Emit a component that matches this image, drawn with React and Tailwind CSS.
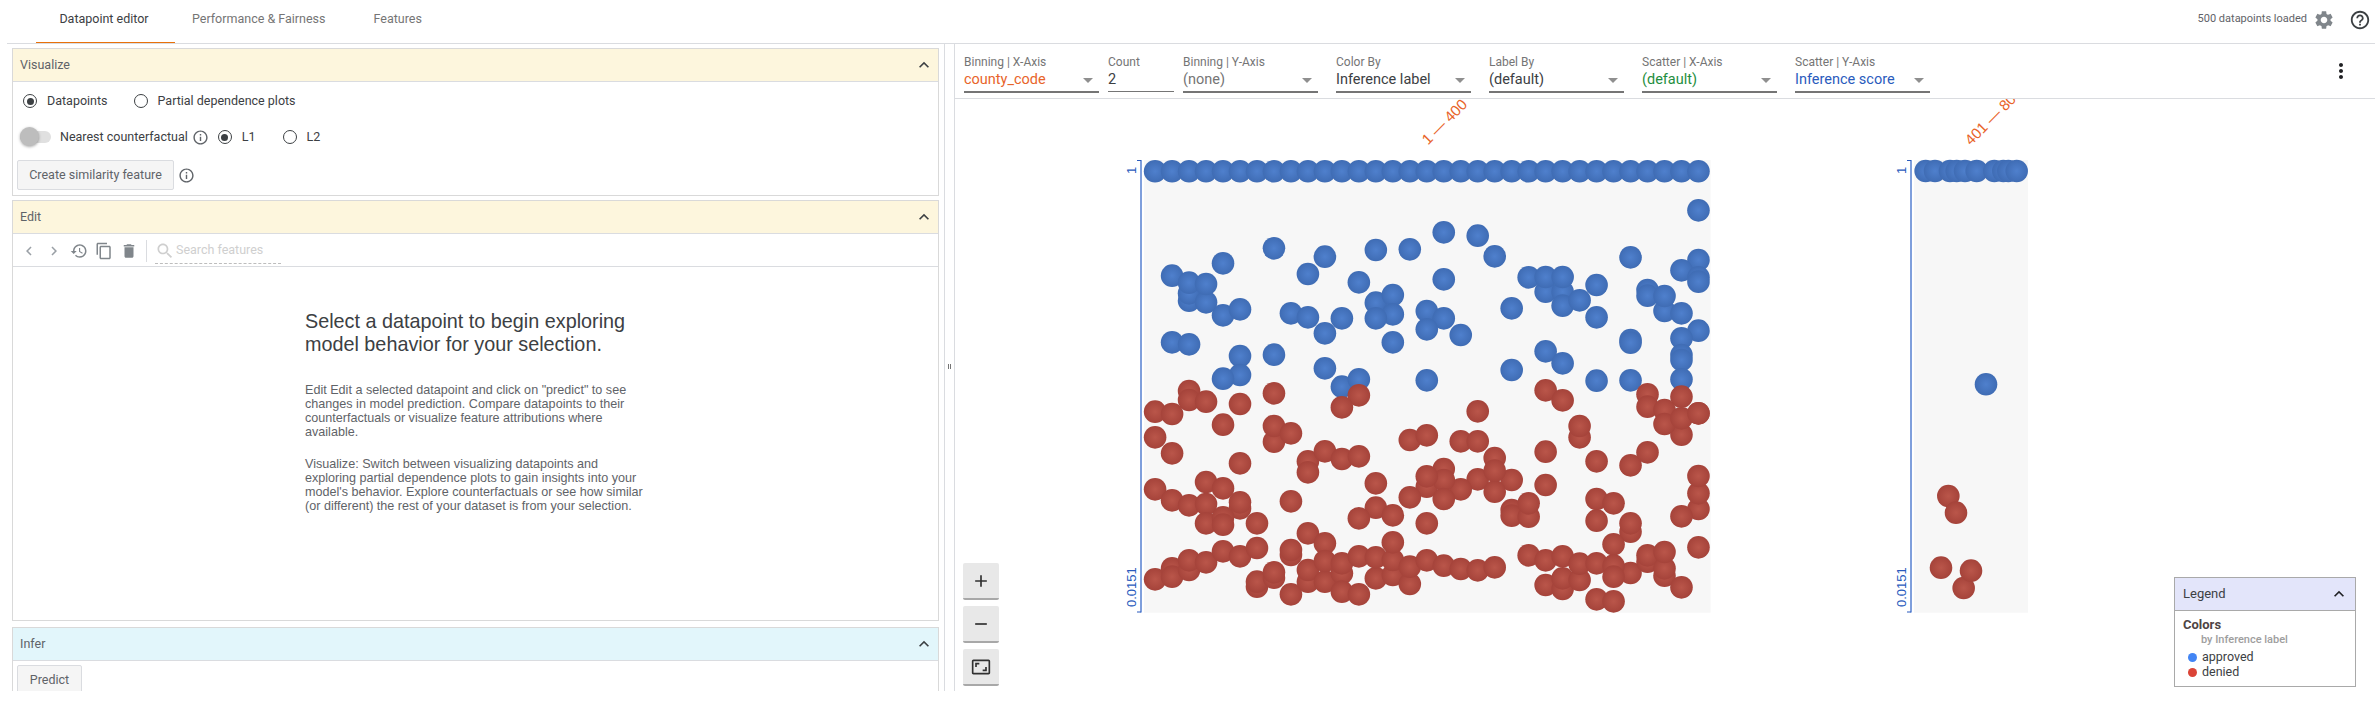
const P = {
  settings: 'M19.14 12.94c.04-.3.06-.61.06-.94 0-.32-.02-.64-.07-.94l2.03-1.58c.18-.14.23-.41.12-.61l-1.92-3.32c-.12-.22-.37-.29-.59-.22l-2.39.96c-.5-.38-1.03-.7-1.62-.94l-.36-2.54c-.04-.24-.24-.41-.48-.41h-3.84c-.24 0-.43.17-.47.41l-.36 2.54c-.59.24-1.13.57-1.62.94l-2.39-.96c-.22-.08-.47 0-.59.22L2.74 8.87c-.12.21-.08.47.12.61l2.03 1.58c-.05.3-.09.63-.09.94s.02.64.07.94l-2.03 1.58c-.18.14-.23.41-.12.61l1.92 3.32c.12.22.37.29.59.22l2.39-.96c.5.38 1.03.7 1.62.94l.36 2.54c.05.24.24.41.48.41h3.84c.24 0 .44-.17.47-.41l.36-2.54c.59-.24 1.13-.56 1.62-.94l2.39.96c.22.08.47 0 .59-.22l1.92-3.32c.12-.22.07-.47-.12-.61l-2.01-1.58zM12 15.6c-1.98 0-3.6-1.62-3.6-3.6s1.62-3.6 3.6-3.6 3.6 1.62 3.6 3.6-1.62 3.6-3.6 3.6z',
  help: 'M11 18h2v-2h-2v2zm1-16C6.48 2 2 6.48 2 12s4.48 10 10 10 10-4.48 10-10S17.52 2 12 2zm0 18c-4.41 0-8-3.59-8-8s3.59-8 8-8 8 3.59 8 8-3.59 8-8 8zm0-14c-2.21 0-4 1.79-4 4h2c0-1.1.9-2 2-2s2 .9 2 2c0 2-3 1.75-3 5h2c0-2.25 3-2.5 3-5 0-2.21-1.79-4-4-4z',
  info: 'M11 7h2v2h-2zm0 4h2v6h-2zm1-9C6.48 2 2 6.48 2 12s4.48 10 10 10 10-4.48 10-10S17.52 2 12 2zm0 18c-4.41 0-8-3.59-8-8s3.59-8 8-8 8 3.59 8 8-3.59 8-8 8z',
  less: 'M12 8l-6 6 1.41 1.41L12 10.83l4.59 4.58L18 14z',
  left: 'M15.41 7.41L14 6l-6 6 6 6 1.41-1.41L10.83 12z',
  right: 'M10 6L8.59 7.41 13.17 12l-4.58 4.59L10 18l6-6z',
  history: 'M13 3c-4.97 0-9 4.03-9 9H1l3.89 3.89.07.14L9 12H6c0-3.87 3.13-7 7-7s7 3.13 7 7-3.13 7-7 7c-1.93 0-3.68-.79-4.94-2.06l-1.42 1.42C8.27 19.99 10.51 21 13 21c4.97 0 9-4.03 9-9s-4.03-9-9-9zm-1 5v5l4.28 2.54.72-1.21-3.5-2.08V8H12z',
  copy: 'M16 1H4c-1.1 0-2 .9-2 2v14h2V3h12V1zm3 4H8c-1.1 0-2 .9-2 2v14c0 1.1.9 2 2 2h11c1.1 0 2-.9 2-2V7c0-1.1-.9-2-2-2zm0 16H8V7h11v14z',
  trash: 'M6 19c0 1.1.9 2 2 2h8c1.1 0 2-.9 2-2V7H6v12zM19 4h-3.5l-1-1h-5l-1 1H5v2h14V4z',
  search: 'M15.5 14h-.79l-.28-.27C15.41 12.59 16 11.11 16 9.5 16 5.91 13.09 3 9.5 3S3 5.91 3 9.5 5.91 16 9.5 16c1.61 0 3.09-.59 4.23-1.57l.27.28v.79l5 4.99L20.49 19l-4.99-5zm-6 0C7.01 14 5 11.99 5 9.5S7.01 5 9.5 5 14 7.01 14 9.5 11.99 14 9.5 14z',
  more: 'M12 8c1.1 0 2-.9 2-2s-.9-2-2-2-2 .9-2 2 .9 2 2 2zm0 2c-1.1 0-2 .9-2 2s.9 2 2 2 2-.9 2-2-.9-2-2-2zm0 6c-1.1 0-2 .9-2 2s.9 2 2 2 2-.9 2-2-.9-2-2-2z',
  add: 'M19 13h-6v6h-2v-6H5v-2h6V5h2v6h6v2z',
  remove: 'M19 13H5v-2h14v2z',
  aspect: 'M19 12h-2v3h-3v2h5v-5zM7 9h3V7H5v5h2V9zm14-6H3c-1.1 0-2 .9-2 2v14c0 1.1.9 2 2 2h18c1.1 0 2-.9 2-2V5c0-1.1-.9-2-2-2zm0 16.01H3V4.99h18v14.02z',
};

const Icon = ({ d, className }) => (
  <svg viewBox="0 0 24 24" className={className} fill="currentColor"><path d={d} /></svg>
);

// blue / red dots as [column, y] read off the chart
const colX = (c) => 1155.1 + c * 16.98;
const y4 = (v) => 150 + v / 3;
const y5 = (v) => 400 + v / 3;

const BLUE = [
  [32,181],[17,247],[19,257],[20,319],[7,295],[10,320],[13,300],[15,298],[4,340],[9,372],[1,377],[2,452],[2,430],[3,457],[2,398],[3,402],
  [4,496],[5,478],[12,397],[17,388],[23,425],[24,425],[24,467],[25,451],[22,382],[23,381],[24,381],[26,405],[26,502],[28,322],[32,330],[31,361],
  [32,382],[32,395],[29,420],[29,437],[30,483],[31,490],[30,438],[32,542],[31,565],[31,615],[31,630],[31,688],[28,570],[28,578],[28,691],[26,692],
  [23,604],[24,640],[21,475],[21,660],[18,555],[16,483],[17,505],[16,538],[16,691],[13,458],[14,435],[14,493],[13,505],[14,577],[11,505],[8,490],
  [9,502],[10,550],[1,577],[2,583],[5,618],[7,614],[5,675],[4,686],[10,655],[11,710],[12,688],
].map(([c, v]) => [colX(c), y4(v)]);

const RED_TOP = [
  [2,723],[2,750],[3,755],[5,762],[0,785],[1,792],[7,730],[12,736],[11,772],[23,721],[24,751],[19,784],[29,733],[29,770],[31,740],[30,780],[32,790],
].map(([c, v]) => [colX(c), y4(v)]);

const RED_LOW = [
  [4,74],[0,112],[1,160],[7,125],[7,78],[8,100],[5,190],[0,268],[1,301],[2,316],[3,246],[4,265],[3,312],[5,325],[5,307],[3,370],[4,352],[4,374],[6,370],
  [8,304],[9,184],[9,217],[10,154],[11,177],[12,169],[13,250],[13,323],[14,346],[12,355],[15,120],[16,106],[18,124],[19,124],[20,174],[19,238],[21,240],
  [20,275],[20,212],[18,268],[17,207],[16,260],[17,240],[16,229],[17,297],[15,292],[16,370],[21,330],[21,347],[22,350],[22,310],[23,155],[23,255],[25,112],[25,78],
  [26,184],[28,196],[29,157],[31,104],[30,72],[31,55],[32,40],[32,327],[32,280],[32,228],[31,349],[26,297],[27,310],[26,362],[28,395],[28,370],[27,433],[32,442],
  [0,538],[1,505],[1,530],[2,510],[2,481],[3,487],[4,454],[5,469],[6,444],[6,560],[6,545],[7,533],[7,517],[8,465],[8,450],[8,583],[9,400],[10,430],
  [9,545],[9,510],[10,545],[10,483],[11,520],[11,490],[11,575],[12,469],[12,583],[13,535],[13,472],[14,525],[14,480],[14,427],[15,552],[15,500],[16,481],[17,497],[18,507],[19,511],[20,502],
  [22,466],[23,555],[23,481],[24,567],[24,535],[24,469],[25,540],[25,491],[26,490],[26,598],[28,519],[27,497],[27,530],[27,604],[29,485],[29,466],[30,527],[30,505],[30,456],[31,562],
].map(([c, v]) => [colX(c), y5(v)]);

const BLUE_2 = [197, 225, 270, 290, 315, 350, 403, 430, 445, 470].map((v) => [1860 + v / 3, 171]);
const RED_2 = [[265,408],[288,458],[243,623],[311,684],[333,632]].map(([x, v]) => [1860 + x / 3, 360 + v / 3]);
const TOP_ROW = Array.from({ length: 33 }, (_, i) => [colX(i), 171.3]);

const Dots = ({ points, fill }) => points.map(([x, y], i) => (
  <circle key={i} cx={x} cy={y} r="11.3" fill={fill} />
));

const YAxis = ({ x, labelX }) => (
  <g>
    <rect x={x - 1} y="160" width="2" height="452.5" fill="#7f9fdc" />
    <rect x={x - 4} y="160" width="4" height="1" fill="#2a5bbd" />
    <rect x={x - 4} y="611.5" width="4" height="1" fill="#2a5bbd" />
    <text transform={`translate(${labelX} 174) rotate(-90)`} fontSize="13" fill="#2a5bbd" fontFamily="Liberation Sans, sans-serif">1</text>
    <text transform={`translate(${labelX} 607) rotate(-90)`} fontSize="13" fill="#2a5bbd" fontFamily="Liberation Sans, sans-serif">0.0151</text>
  </g>
);

const Chart = () => (
  <svg viewBox="955 99 1420 592" className="absolute top-0 left-0 w-[1420px] h-[592px]">
    <defs>
      <radialGradient id="dotBlue">
        <stop offset="0%" stopColor="#4f80cd" />
        <stop offset="100%" stopColor="#3f6cb4" />
      </radialGradient>
      <radialGradient id="dotRed">
        <stop offset="0%" stopColor="#ba564a" />
        <stop offset="100%" stopColor="#a5433a" />
      </radialGradient>
    </defs>
    <rect x="1144" y="160" width="566.6" height="452.7" fill="#f7f7f7" />
    <rect x="1914" y="160" width="114" height="452.7" fill="#f7f7f7" />
    <YAxis x={1141} labelX={1136} />
    <YAxis x={1911} labelX={1906} />
    <Dots points={TOP_ROW} fill="url(#dotBlue)" />
    <Dots points={BLUE} fill="url(#dotBlue)" />
    <Dots points={RED_TOP} fill="url(#dotRed)" />
    <Dots points={RED_LOW} fill="url(#dotRed)" />
    <Dots points={BLUE_2} fill="url(#dotBlue)" />
    <circle cx="1986" cy="384.3" r="11.3" fill="url(#dotBlue)" />
    <Dots points={RED_2} fill="url(#dotRed)" />
    <text transform="translate(1428 145.5) rotate(-45)" fontSize="15" fill="#e8642a" fontFamily="Liberation Sans, sans-serif">1 — 400</text>
    <text transform="translate(1971 146) rotate(-45)" fontSize="15" fill="#e8642a" fontFamily="Liberation Sans, sans-serif">401 — 800</text>
  </svg>
);

const Radio = ({ checked, label, className }) => (
  <div className={`flex items-center gap-[10px] ${className || ''}`}>
    <div className="w-[14px] h-[14px] rounded-full border border-[#3c4043] flex items-center justify-center">
      {checked && <div className="w-[7px] h-[7px] rounded-full bg-[#3c4043]" />}
    </div>
    <span className="text-[12.5px] text-[#3c4043]">{label}</span>
  </div>
);

const CardHeader = ({ title, bg }) => (
  <div className={`h-[33px] flex items-center justify-between pl-[7px] pr-[4px] border-b border-[#dadce0] ${bg}`}>
    <span className="text-[12.5px] text-[#5f6368]">{title}</span>
    <Icon d={P.less} className="w-[20px] h-[20px] text-[#3c4043]" />
  </div>
);

const Select = ({ label, value, valueClass, width = 'w-[135px]', gap = 'mr-[18px]' }) => (
  <div className={`${width} ${gap} flex flex-col`}>
    <span className="text-[12px] leading-[14px] text-[#757575] mt-[11px]">{label}</span>
    <div className="h-[24px] flex items-center justify-between pr-[6px] border-b-2 border-[#757575]">
      <span className={`text-[14.5px] ${valueClass}`}>{value}</span>
      <div className="w-0 h-0 border-l-[5px] border-r-[5px] border-t-[5px] border-l-transparent border-r-transparent border-t-[#8f8f8f]" />
    </div>
  </div>
);

const ZoomButton = ({ d }) => (
  <div className="w-[36px] h-[37px] bg-[#e8e8e8] rounded-[2px] border-b-2 border-[#a8a8a8] flex items-center justify-center">
    <Icon d={d} className="w-[20px] h-[20px] text-[#303030]" />
  </div>
);

export default function App() {
  return (
    <div className="w-full h-[691px] bg-white overflow-hidden font-['Roboto',sans-serif]">
      <div className="ml-[7px] h-[44px] border-b border-[#dadce0] flex items-center">
        <div className="ml-[29px] w-[139px] h-[43px] pb-[4px] pr-[3px] border-b-[1px] border-[#e8710a] flex items-center justify-center text-[12.5px] text-[#3c4043]">Datapoint editor</div>
        <div className="ml-[17px] pb-[4px] text-[12.5px] text-[#757575]">Performance &amp; Fairness</div>
        <div className="ml-[48px] pb-[4px] text-[12.5px] text-[#757575]">Features</div>
        <div className="ml-auto pb-[4px] flex items-center">
          <span className="text-[11px] text-[#5f6368] mr-[6px]">500 datapoints loaded</span>
          <Icon d={P.settings} className="w-[22px] h-[22px] text-[#80868b] mr-[14px]" />
          <Icon d={P.help} className="w-[22px] h-[22px] text-[#3c4043] mr-[4px]" />
        </div>
      </div>

      <div className="flex h-[647px]">
        <div className="w-[944px] shrink-0 pl-3 pr-[5px] pt-1 flex flex-col gap-[4px]">
          <div className="h-[148px] border border-[#d9d9d9] shrink-0">
            <CardHeader title="Visualize" bg="bg-[#fdf6dd]" />
            <div className="h-[38px] flex items-center pl-[10px]">
              <Radio checked label="Datapoints" />
              <Radio label="Partial dependence plots" className="ml-[26px]" />
            </div>
            <div className="h-[34px] flex items-center pl-[7px]">
              <div className="relative w-[31px] h-[12px] rounded-full bg-[#e0e0e0]">
                <div className="absolute -top-[4px] left-0 w-[19px] h-[19px] rounded-full bg-[#bdbdbd] shadow-[0_1px_3px_rgba(0,0,0,0.35)]" />
              </div>
              <span className="ml-[9px] text-[12.5px] text-[#3c4043]">Nearest counterfactual</span>
              <Icon d={P.info} className="ml-[4px] w-[17px] h-[17px] text-[#5f6368]" />
              <Radio checked label="L1" className="ml-[9px]" />
              <Radio label="L2" className="ml-[27px]" />
            </div>
            <div className="h-[30px] mt-[6px] flex items-center pl-[4px]">
              <div className="w-[157px] h-[30px] bg-[#f5f5f5] border border-[#dadce0] rounded-[2px] flex items-center justify-center text-[12.5px] text-[#5f6368]">Create similarity feature</div>
              <Icon d={P.info} className="ml-[4px] w-[17px] h-[17px] text-[#5f6368]" />
            </div>
          </div>

          <div className="h-[421px] border border-[#d9d9d9] shrink-0 flex flex-col">
            <CardHeader title="Edit" bg="bg-[#fdf6dd]" />
            <div className="h-[33px] pt-[2px] border-b border-[#dadce0] flex items-center pl-[7px] text-[#9aa0a6]">
              <Icon d={P.left} className="w-[18px] h-[18px]" />
              <Icon d={P.right} className="ml-[7px] w-[18px] h-[18px]" />
              <Icon d={P.history} className="ml-[7px] w-[18px] h-[18px] text-[#80868b]" />
              <Icon d={P.copy} className="ml-[7px] w-[18px] h-[18px] text-[#80868b]" />
              <Icon d={P.trash} className="ml-[7px] w-[18px] h-[18px] text-[#80868b]" />
              <div className="ml-[8px] w-px h-[22px] bg-[#dadce0]" />
              <div className="ml-[8px] w-[126px] h-[26px] border-b border-dashed border-[#bdbdbd] flex items-center text-[#cfcfcf]">
                <Icon d={P.search} className="w-[20px] h-[20px]" />
                <span className="ml-[1px] text-[12.5px]">Search features</span>
              </div>
            </div>
            <div className="pl-[292px] pt-[43px] font-['Liberation_Sans',sans-serif]">
              <h2 className="w-[340px] text-[19.8px] leading-[23px] font-normal text-[#3c4043]">Select a datapoint to begin exploring model behavior for your selection.</h2>
              <p className="w-[345px] mt-[27px] text-[12.6px] leading-[14px] text-[#5f6368]">Edit Edit a selected datapoint and click on "predict" to see changes in model prediction. Compare datapoints to their counterfactuals or visualize feature attributions where available.</p>
              <p className="w-[345px] mt-[18px] text-[12.6px] leading-[14px] text-[#5f6368]">Visualize: Switch between visualizing datapoints and exploring partial dependence plots to gain insights into your model's behavior. Explore counterfactuals or see how similar (or different) the rest of your dataset is from your selection.</p>
            </div>
          </div>

          <div className="flex-1 mt-[2px] border border-b-0 border-[#d9d9d9]">
            <CardHeader title="Infer" bg="bg-[#e2f6fb]" />
            <div className="pl-[4px] pt-[4px]">
              <div className="w-[65px] h-[30px] bg-[#f5f5f5] border border-[#dadce0] rounded-[2px] flex items-center justify-center text-[12.5px] text-[#5f6368]">Predict</div>
            </div>
          </div>
        </div>

        <div className="w-[11px] shrink-0 border-l border-r border-[#dadce0] flex items-center justify-center">
          <div className="flex gap-px mb-[3px]">
            <div className="w-px h-[5px] bg-[#757575]" />
            <div className="w-px h-[5px] bg-[#757575]" />
          </div>
        </div>

        <div className="flex-1 flex flex-col min-w-0">
          <div className="h-[55px] border-b border-[#dadce0] shrink-0 flex pl-[9px]">
            <Select label="Binning | X-Axis" value="county_code" valueClass="text-[#e8642a]" gap="mr-[9px]" />
            <div className="w-[66px] mr-[9px] flex flex-col">
              <span className="text-[12px] leading-[14px] text-[#757575] mt-[11px]">Count</span>
              <div className="h-[23px] flex items-center border-b border-[#757575] text-[14.5px] text-[#3c4043]">2</div>
            </div>
            <Select label="Binning | Y-Axis" value="(none)" valueClass="text-[#757575]" />
            <Select label="Color By" value="Inference label" valueClass="text-[#3c4043]" />
            <Select label="Label By" value="(default)" valueClass="text-[#3c4043]" />
            <Select label="Scatter | X-Axis" value="(default)" valueClass="text-[#1e8e3e]" />
            <Select label="Scatter | Y-Axis" value="Inference score" valueClass="text-[#2a5bbd]" />
            <Icon d={P.more} className="ml-auto mr-[22px] mt-[15px] w-[24px] h-[24px] text-[#202124]" />
          </div>
          <div className="relative flex-1 overflow-hidden">
            <Chart />
            <div className="absolute left-[8px] bottom-[5px] flex flex-col gap-[6px]">
              <ZoomButton d={P.add} />
              <ZoomButton d={P.remove} />
              <ZoomButton d={P.aspect} />
            </div>
            <div className="absolute left-[1219px] top-[478px] w-[182px] h-[110px] border border-[#a9a9a9] bg-white">
              <div className="h-[33px] bg-[#e3e5fa] border-b border-[#a9a9a9] flex items-center justify-between pl-[8px] pr-[6px]">
                <span className="text-[13px] text-[#3c4043]">Legend</span>
                <Icon d={P.less} className="w-[20px] h-[20px] text-[#202124]" />
              </div>
              <div className="pl-[8px] pt-[6px]">
                <div className="text-[13px] leading-[16px] font-bold text-[#4e4444]">Colors</div>
                <div className="pl-[18px] text-[11px] leading-[14px] font-medium text-[#9e9e9e]">by Inference label</div>
                <div className="flex items-center h-[15px] pl-[5px] mt-[3px] text-[12.5px] text-[#3c4043]">
                  <div className="w-[9px] h-[9px] rounded-full bg-[#4285f4] mr-[5px]" />approved
                </div>
                <div className="flex items-center h-[15px] pl-[5px] text-[12.5px] text-[#3c4043]">
                  <div className="w-[9px] h-[9px] rounded-full bg-[#db4437] mr-[5px]" />denied
                </div>
              </div>
            </div>
          </div>
        </div>
      </div>
    </div>
  );
}
